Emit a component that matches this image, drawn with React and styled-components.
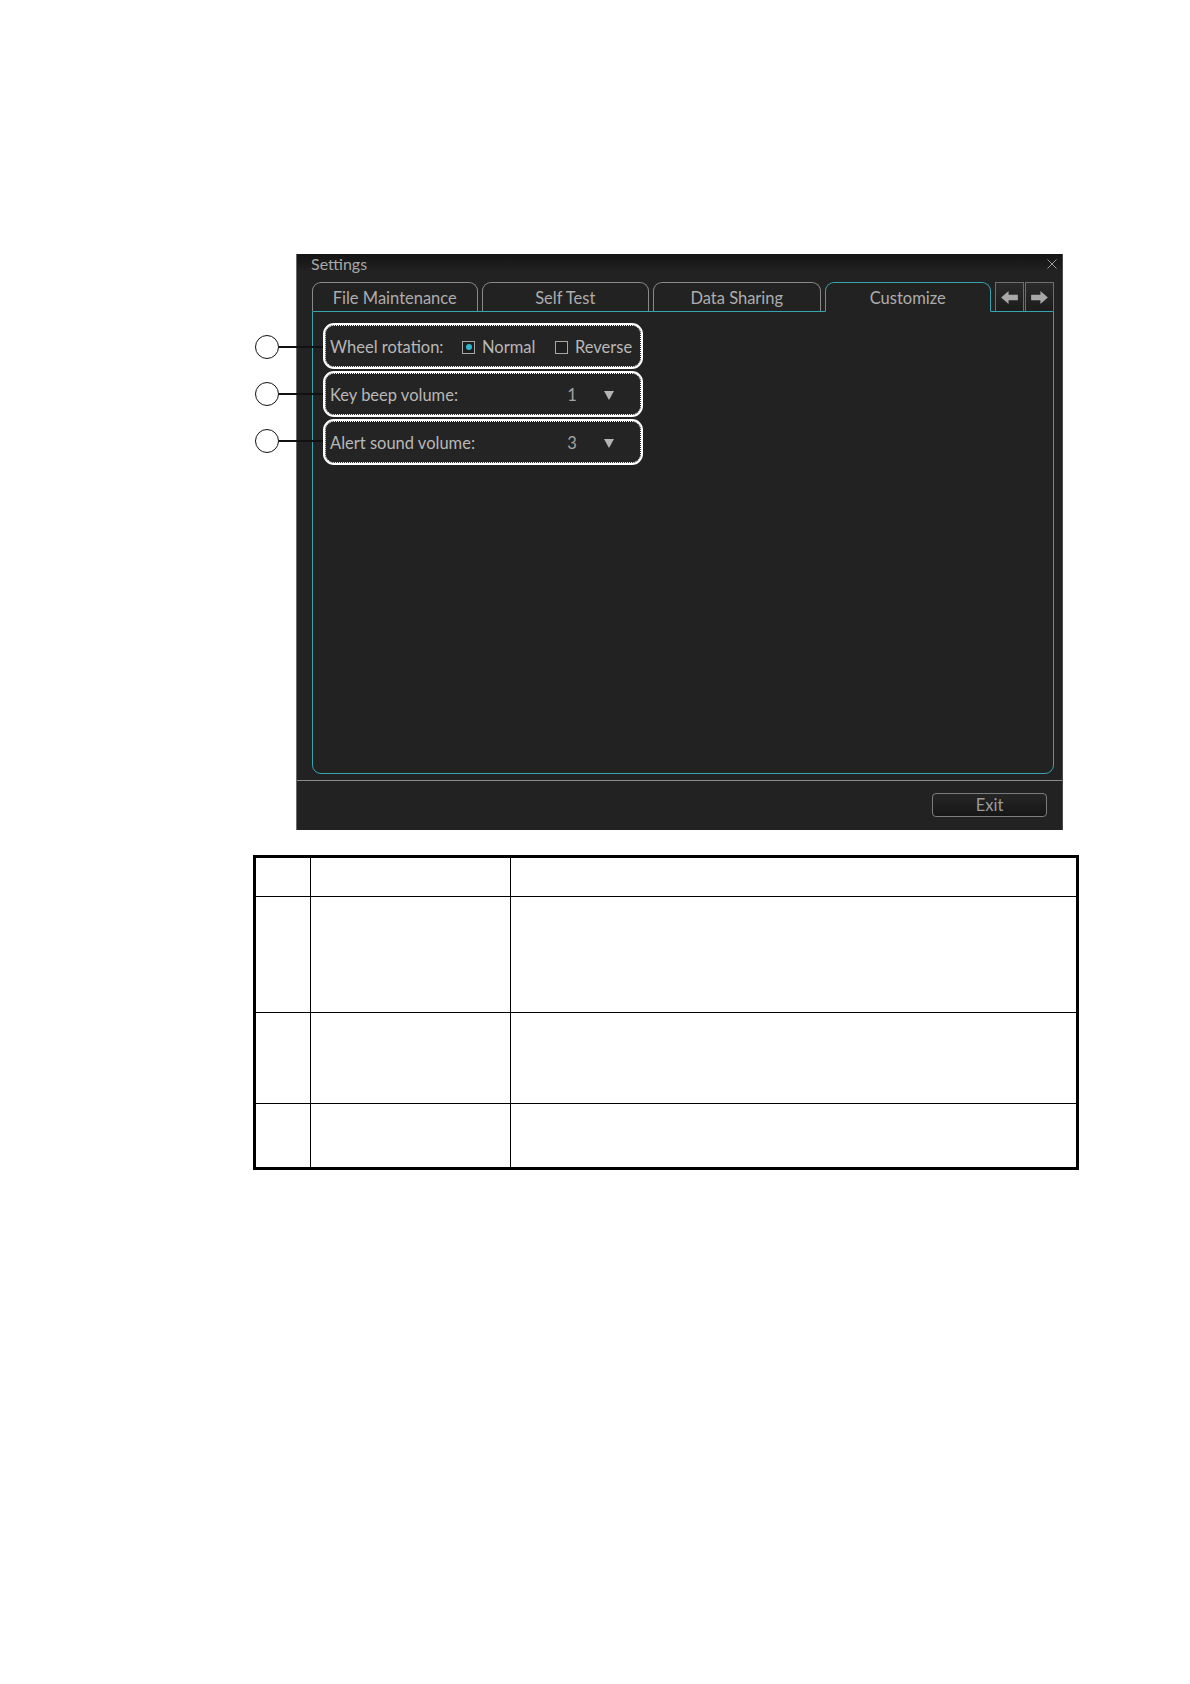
import React from "react";
import styled, { createGlobalStyle } from "styled-components";

const GlobalStyle = createGlobalStyle`
  html, body {
    margin: 0;
    padding: 0;
    background: #ffffff;
  }
  body {
    font-family: Lato, "Open Sans", sans-serif;
  }
`;

const TEAL = "#35a6b0";
const WINDOW_BG = "#222222";

const tabs = [
  { label: "File Maintenance", width: 166 },
  { label: "Self Test", width: 168 },
  { label: "Data Sharing", width: 168 },
  { label: "Customize", width: 167, active: true },
];

function App() {
  return (
    <>
      <GlobalStyle />
      <Page>
        <Window>
          <TitleBar>
            <span>Settings</span>
            <CloseIcon viewBox="0 0 10 10">
              <path d="M0.5 0.5 L9.5 9.5 M9.5 0.5 L0.5 9.5" />
            </CloseIcon>
          </TitleBar>
          <Body>
            <TabRow>
              {tabs.map((t) => (
                <Tab key={t.label} $active={t.active} $width={t.width}>
                  {t.label}
                </Tab>
              ))}
              <ArrowGroup>
                <ArrowButton>
                  <ArrowIcon viewBox="0 0 18 14">
                    <path d="M0 7 L8 0 L8 4 L18 4 L18 10 L8 10 L8 14 Z" />
                  </ArrowIcon>
                </ArrowButton>
                <ArrowButton>
                  <ArrowIcon viewBox="0 0 18 14">
                    <path d="M18 7 L10 0 L10 4 L0 4 L0 10 L10 10 L10 14 Z" />
                  </ArrowIcon>
                </ArrowButton>
              </ArrowGroup>
            </TabRow>
            <Panel>
              <SettingBox>
                <Callout $shift={2} />
                <Label $width={132}>Wheel rotation:</Label>
                <Choice $width={93}>
                  <CheckBox $checked />
                  Normal
                </Choice>
                <Choice>
                  <CheckBox />
                  Reverse
                </Choice>
              </SettingBox>
              <SettingBox>
                <Callout $shift={1} />
                <Label>Key beep volume:</Label>
                <Dropdown>
                  <Value>1</Value>
                  <Caret />
                </Dropdown>
              </SettingBox>
              <SettingBox>
                <Callout />
                <Label>Alert sound volume:</Label>
                <Dropdown>
                  <Value>3</Value>
                  <Caret />
                </Dropdown>
              </SettingBox>
            </Panel>
          </Body>
          <Footer>
            <ExitButton>Exit</ExitButton>
          </Footer>
        </Window>

        <Table>
          <tbody>
            <Row $h={40}>
              <Cell $w={54} />
              <Cell $w={199} />
              <Cell />
            </Row>
            <Row $h={116}>
              <Cell />
              <Cell />
              <Cell />
            </Row>
            <Row $h={91}>
              <Cell />
              <Cell />
              <Cell />
            </Row>
            <Row $h={65}>
              <Cell />
              <Cell />
              <Cell />
            </Row>
          </tbody>
        </Table>
      </Page>
    </>
  );
}

function Callout({ $shift = 0 }) {
  return (
    <CalloutWrap $shift={$shift}>
      <CalloutCircle />
      <CalloutLine />
    </CalloutWrap>
  );
}

const Page = styled.div`
  min-height: 1684px;
  box-sizing: border-box;
  padding: 254px 0 0 253px;
`;

const Window = styled.div`
  margin-left: 43px;
  width: 767px;
  height: 576px;
  box-sizing: border-box;
  background: ${WINDOW_BG};
  border-left: 1px solid #6a6a6a;
  border-right: 1px solid #4a4a4a;
  display: flex;
  flex-direction: column;
`;

const TitleBar = styled.div`
  height: 19px;
  flex: none;
  display: flex;
  align-items: center;
  justify-content: space-between;
  padding: 0 5px 0 14px;
  background: linear-gradient(#141414, #1c1c1c 60%, #242424);
  color: #a8a8a8;
  font-size: 16px;
  line-height: 19px;
`;

const CloseIcon = styled.svg`
  width: 10px;
  height: 10px;
  stroke: #9a9a9a;
  stroke-width: 1;
  fill: none;
`;

const Body = styled.div`
  padding: 9px 8px 0 15px;
`;

const TabRow = styled.div`
  display: flex;
  align-items: flex-end;
  gap: 4px;
  height: 29px;
  position: relative;
  z-index: 1;
`;

const Tab = styled.div`
  width: ${(p) => p.$width}px;
  height: ${(p) => (p.$active ? 30 : 29)}px;
  margin-bottom: ${(p) => (p.$active ? -1 : 0)}px;
  box-sizing: border-box;
  border: 1px solid ${(p) => (p.$active ? TEAL : "#8a8a8a")};
  border-bottom: ${(p) => (p.$active ? `1px solid ${WINDOW_BG}` : "none")};
  border-radius: 9px 9px 0 0;
  background: ${WINDOW_BG};
  color: #adadad;
  font-size: 16.5px;
  display: flex;
  align-items: center;
  justify-content: center;
  padding-top: 1px;
`;

const ArrowGroup = styled.div`
  display: flex;
  gap: 1px;
  height: 29px;
`;

const ArrowButton = styled.div`
  width: 29px;
  height: 29px;
  box-sizing: border-box;
  border: 1px solid #6e6e6e;
  border-bottom: none;
  background: linear-gradient(#2a2a2a, #1c1c1c);
  display: flex;
  align-items: center;
  justify-content: center;
`;

const ArrowIcon = styled.svg`
  width: 17px;
  height: 13px;
  fill: #a8a8a8;
`;

const Panel = styled.div`
  height: 463px;
  box-sizing: border-box;
  border: 1px solid ${TEAL};
  border-radius: 0 0 9px 9px;
  padding: 11px 10px;
  display: flex;
  flex-direction: column;
  gap: 2px;
`;

const SettingBox = styled.div`
  position: relative;
  width: 320px;
  height: 46px;
  box-sizing: border-box;
  border: 2px solid #ffffff;
  outline: 1px dotted #ffffff;
  outline-offset: -3px;
  border-radius: 11px;
  background: #242424;
  display: flex;
  align-items: center;
  padding: 2px 0 0 5px;
  color: #b8b8b8;
  font-size: 16.5px;
`;

const Label = styled.span`
  white-space: nowrap;
  ${(p) => (p.$width ? `width: ${p.$width}px; flex: none;` : "")}
`;

const Choice = styled.span`
  display: flex;
  align-items: center;
  gap: 7px;
  white-space: nowrap;
  ${(p) => (p.$width ? `width: ${p.$width}px; flex: none;` : "")}
`;

const CheckBox = styled.span`
  width: 13px;
  height: 13px;
  box-sizing: border-box;
  border: 1px solid #a6a6a6;
  background: #1e1e1e;
  display: inline-flex;
  align-items: center;
  justify-content: center;
  &::after {
    content: "";
    display: ${(p) => (p.$checked ? "block" : "none")};
    width: 6px;
    height: 6px;
    border-radius: 50%;
    background: #2fb8cc;
  }
`;

const Dropdown = styled.span`
  margin-left: auto;
  display: flex;
  align-items: center;
  gap: 22px;
  padding-right: 27px;
`;

const Value = styled.span`
  width: 20px;
  text-align: center;
  color: #a4a4a4;
`;

const Caret = styled.span`
  width: 0;
  height: 0;
  border-left: 5.5px solid transparent;
  border-right: 5.5px solid transparent;
  border-top: 9px solid #b4b4b4;
`;

const CalloutWrap = styled.span`
  position: absolute;
  left: -70px;
  top: calc(50% - 1px + ${(p) => p.$shift}px);
  transform: translateY(-50%);
  display: flex;
  align-items: center;
`;

const CalloutCircle = styled.span`
  width: 24px;
  height: 24px;
  box-sizing: border-box;
  border: 1.5px solid #111;
  border-radius: 50%;
  background: #fff;
`;

const CalloutLine = styled.span`
  width: 44px;
  height: 2px;
  background: #111;
`;

const Footer = styled.div`
  margin-top: 6px;
  border-top: 1px solid #8c8c8c;
  flex: 1;
  display: flex;
  justify-content: flex-end;
  align-items: flex-start;
  padding: 12px 15px 0 0;
`;

const ExitButton = styled.div`
  width: 115px;
  height: 24px;
  box-sizing: border-box;
  border: 1px solid #7c7c7c;
  border-radius: 4px;
  background: linear-gradient(#262626, #161616);
  color: #9c9c9c;
  font-size: 16.5px;
  display: flex;
  align-items: center;
  justify-content: center;
`;

const Table = styled.table`
  margin-top: 25px;
  width: 826px;
  border-collapse: collapse;
  border: 3px solid #000;
`;

const Row = styled.tr`
  height: ${(p) => p.$h}px;
`;

const Cell = styled.td`
  border: 1px solid #000;
  padding: 0;
  ${(p) => (p.$w ? `width: ${p.$w}px;` : "")}
`;

export default App;
